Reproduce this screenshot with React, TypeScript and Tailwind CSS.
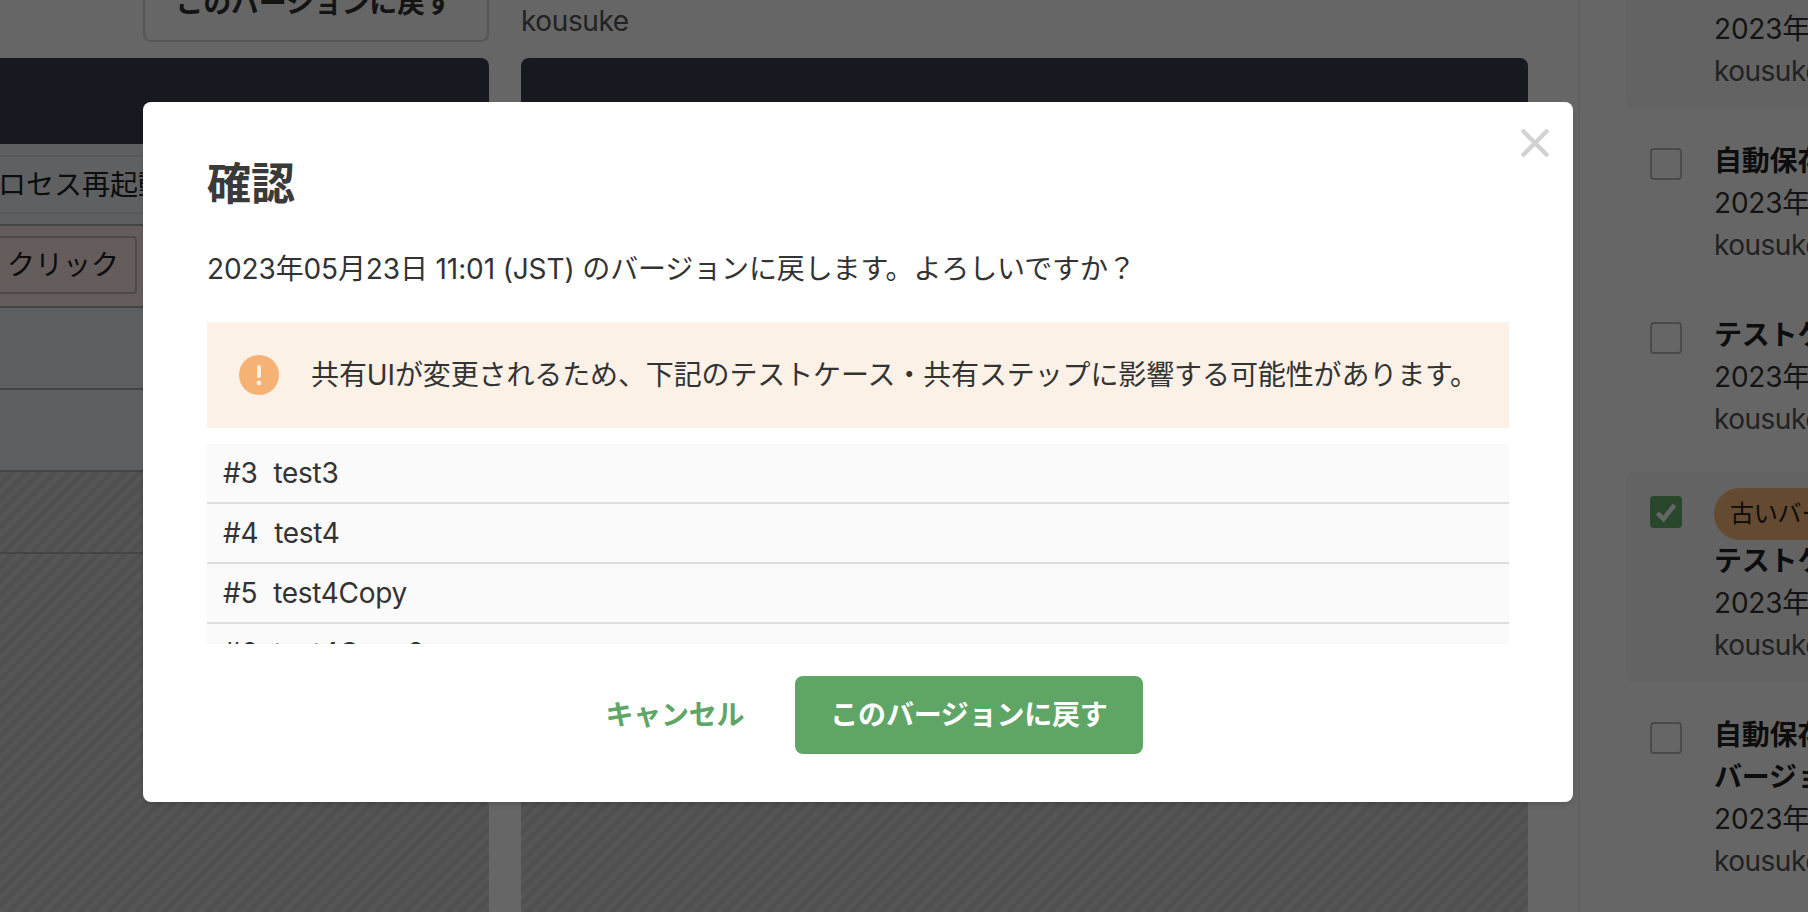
import React from "react";

const hatch = "bg-[repeating-linear-gradient(135deg,#d4d4d4,#d4d4d4_5px,#c8c8c8_5px,#c8c8c8_10px)]";

function Rows({ first, second }: { first?: React.ReactNode; second?: React.ReactNode }) {
  return (
    <>
      <div className="h-[86px] shrink-0 rounded-t-lg bg-[#374151]" />
      <div className="h-[82px] shrink-0 border-b-2 border-[#aaaaaa] bg-[#e9eef5] pt-[11px]">
        <div className="flex h-[59px] items-center whitespace-nowrap border-y-2 border-[#d8dde4] bg-[#ebf0f6] pl-[10px] text-[28px] text-[#222222]">{first}</div>
      </div>
      <div className="h-[82px] shrink-0 border-b-2 border-[#aaaaaa] bg-[#fce8e6] pt-[10px] pl-[29px]">{second}</div>
      <div className="h-[82px] shrink-0 border-b-2 border-[#aaaaaa] bg-[#e9eef5]" />
      <div className="h-[82px] shrink-0 border-b-2 border-[#aaaaaa] bg-[#e9eef5]" />
      <div className={`h-[82px] shrink-0 border-b-2 border-[#aaaaaa] ${hatch}`} />
      <div className={`min-h-0 flex-1 ${hatch}`} />
    </>
  );
}

function Check({ on }: { on?: boolean }) {
  return on ? (
    <div className="flex h-8 w-8 shrink-0 items-center justify-center rounded bg-[#66b16d]">
      <svg viewBox="0 0 24 24" className="h-6 w-6" fill="none" stroke="#ffffff" strokeWidth="4.5">
        <path d="M3.5 13l6 6L20.5 5" />
      </svg>
    </div>
  ) : (
    <div className="h-8 w-8 shrink-0 rounded border-2 border-[#b8b8b8] bg-white" />
  );
}

function Item({ title, title2, pill, on, hi, date = "2023年05月23日 11:01 (JST)" }: { title: string; title2?: string; pill?: boolean; on?: boolean; hi?: boolean; date?: string }) {
  return (
    <div className={`flex shrink-0 gap-8 rounded-l-lg py-4 pl-6 ${hi ? "bg-[#f7f7f7]" : ""}`}>
      <div className="pt-2">
        <Check on={on} />
      </div>
      <div className="min-w-0 flex-1 overflow-hidden whitespace-nowrap text-[28px] leading-[42px] tracking-[-0.2px]">
        {pill && <div className="flex h-[52px] w-[280px] items-center rounded-full bg-[#f7b978] px-4 text-[24px] text-[#222222]">古いバージョン</div>}
        <div className="font-bold text-[#222222]">{title}</div>
        {title2 && <div className="font-bold text-[#222222]">{title2}</div>}
        <div className="text-[#333333]">{date}</div>
        <div className="tracking-[-0.5px] text-[#555555]">kousuke</div>
      </div>
    </div>
  );
}

export default function App() {
  return (
    <div className="relative h-[912px] w-[1808px] overflow-hidden bg-white font-['Inter','Noto_Sans_CJK_JP',sans-serif]">
      <div className="flex h-[912px] overflow-hidden">
        <div className="-mt-[36px] -ml-10 flex h-[948px] w-[529px] shrink-0 flex-col">
          <div className="mb-[16px] ml-[183px] flex h-[78px] w-[346px] shrink-0 items-center justify-center rounded-lg border-2 border-[#d6d6d6] bg-white pr-1 text-[28px] font-bold tracking-[-0.25px] text-[#333333]">
            このバージョンに戻す
          </div>
          <Rows
            first="プロセス再起動"
            second={
              <div className="flex h-[58px] w-[148px] items-center justify-center rounded border-2 border-[#c4b8b6] bg-[#fce8e6] text-[28px] text-[#222222]">
                クリック
              </div>
            }
          />
        </div>
        <div className="-mt-[36px] ml-8 flex h-[948px] w-[1007px] shrink-0 flex-col">
          <div className="mb-[16px] h-[78px] shrink-0 pt-[36px] text-[28px] leading-[42px] tracking-[-0.4px] text-[#555555]">kousuke</div>
          <Rows />
        </div>
        <div className="-mt-[102px] ml-[50px] flex min-w-0 flex-1 flex-col gap-4 border-l-2 border-[#f0f0f0] pl-[46px]">
          <Item hi pill title="テストケース" />
          <Item title="自動保存" />
          <Item title="テストケース" />
          <Item hi on pill title="テストケース" />
          <Item title="自動保存" title2="バージョン" />
        </div>
      </div>

      <div className="absolute inset-0 bg-[rgba(0,0,0,0.6)]" />

      <div className="absolute top-[102px] left-[143px] flex h-[700px] w-[1430px] flex-col rounded-lg bg-white px-16 pb-12 text-[#333333] shadow-md">
        <button className="absolute top-[27px] right-[24px] text-[#d2d2d2]">
          <svg viewBox="0 0 28 28" className="h-7 w-7" fill="none" stroke="currentColor" strokeWidth="4.4">
            <path d="M1 1l26 26M27 1L1 27" />
          </svg>
        </button>
        <h2 className="mt-[51px] text-[44px] leading-[62px] font-bold text-[#3a3a3a]">確認</h2>
        <p className="mt-[33px] text-[28px] leading-[42px] tracking-[-0.12px]">2023年05月23日 11:01 (JST) のバージョンに戻します。よろしいですか？</p>
        <div className="mt-[32px] flex h-[106px] shrink-0 items-center gap-8 bg-[#fcf1e6] px-8">
          <div className="flex h-10 w-10 shrink-0 items-center justify-center rounded-full bg-[#f5b274]">
            <svg viewBox="0 0 40 40" className="h-10 w-10">
              <rect x="18" y="10" width="4" height="13" rx="2" fill="#fcf1e6" />
              <circle cx="20" cy="28" r="2.4" fill="#fcf1e6" />
            </svg>
          </div>
          <span className="whitespace-nowrap text-[28px] tracking-[-0.12px]">共有UIが変更されるため、下記のテストケース・共有ステップに影響する可能性があります。</span>
        </div>
        <div className="mt-4 h-[200px] shrink-0 overflow-hidden">
          {[
            ["#3", "test3"],
            ["#4", "test4"],
            ["#5", "test4Copy"],
            ["#6", "test4Copy2"],
          ].map(([n, t]) => (
            <div key={n} className="flex h-[60px] shrink-0 items-center gap-4 border-b-2 border-[#dedede] bg-[#fafafa] px-4 text-[28px] tracking-[-0.3px] text-[#333333]">
              <span>{n}</span>
              <span>{t}</span>
            </div>
          ))}
        </div>
        <div className="mt-8 flex justify-center gap-[15px] pr-1">
          <button className="flex h-[78px] items-center px-9 text-[28px] font-bold tracking-[-0.23px] text-[#5fa666]">キャンセル</button>
          <button className="flex h-[78px] items-center rounded-lg bg-[#5fa666] px-[35px] text-[28px] font-bold tracking-[-0.23px] text-white">このバージョンに戻す</button>
        </div>
      </div>
    </div>
  );
}
